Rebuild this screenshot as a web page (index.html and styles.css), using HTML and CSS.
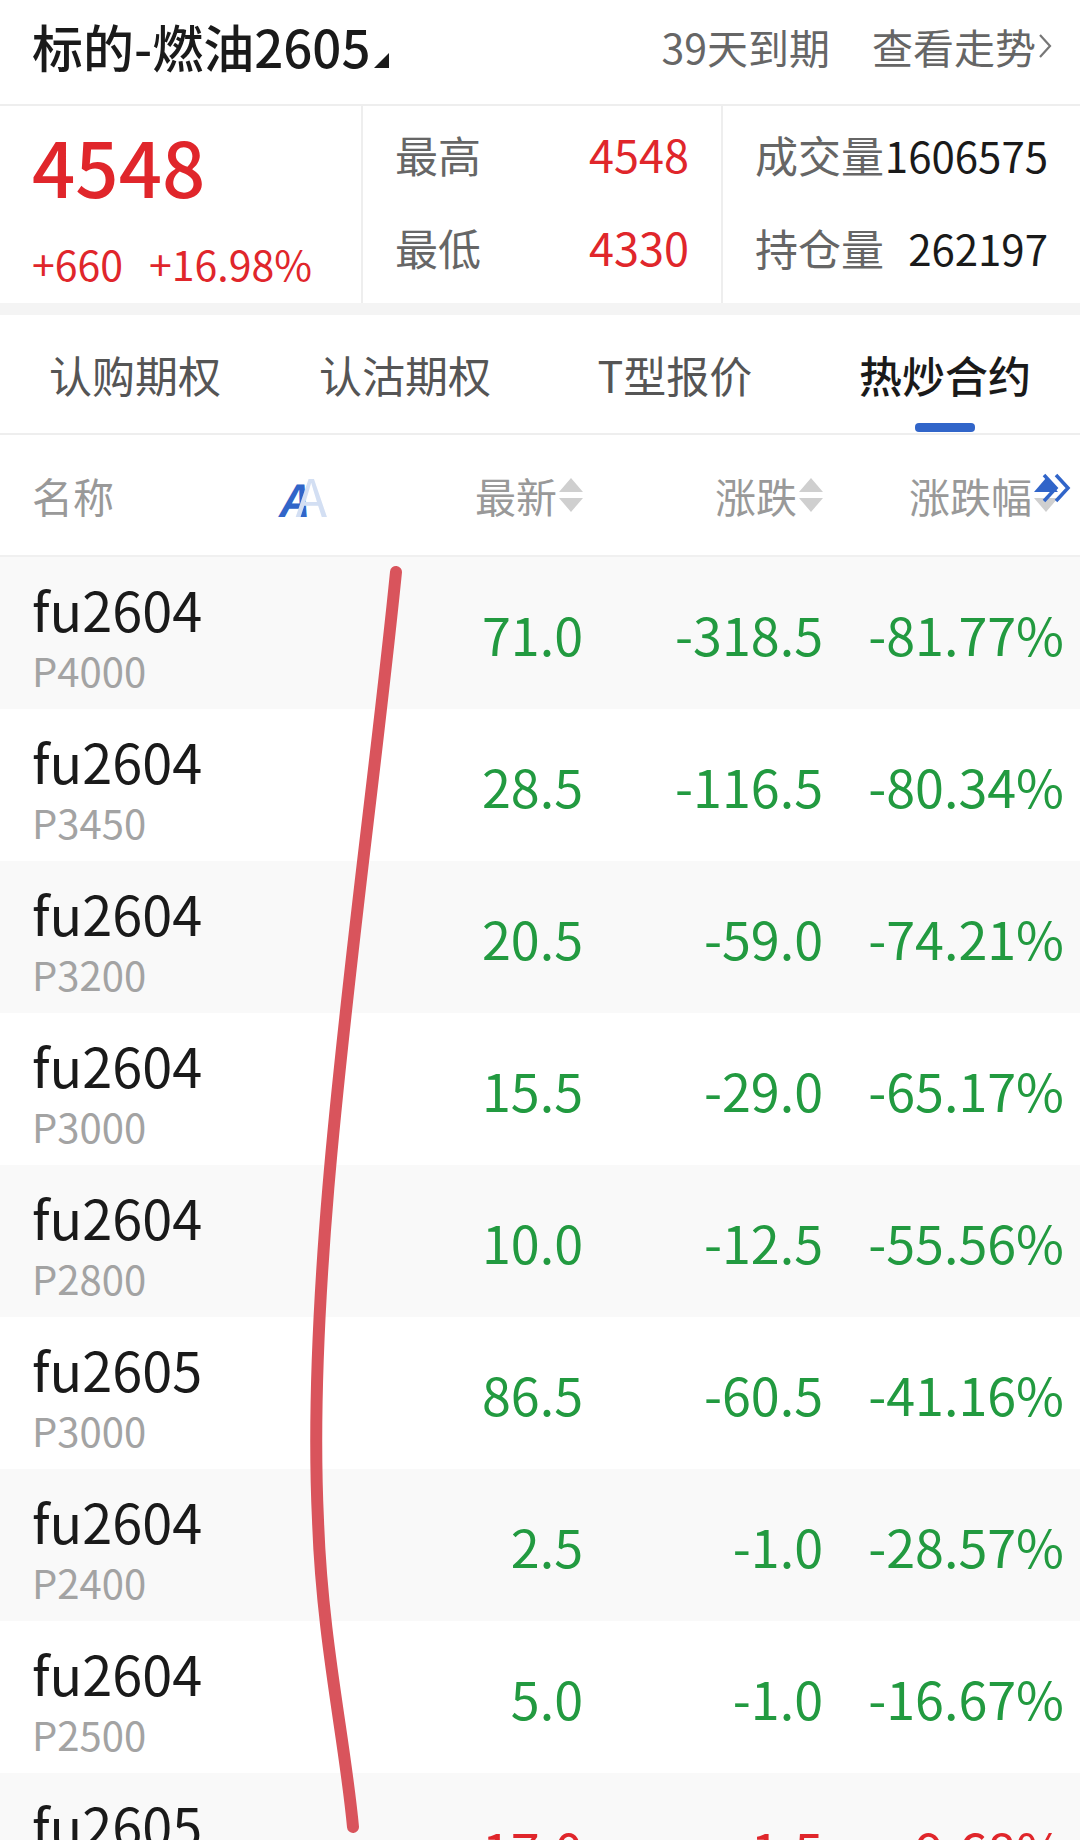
FILE: index.html
```html
<!DOCTYPE html>
<html lang="zh-CN">
<head>
    <meta charset="UTF-8">
    <meta name="viewport" content="width=device-width, initial-scale=1.0">
    <title>热炒合约</title>
    <link rel="stylesheet" href="styles.css">
</head>
<body>
<div class="screen">
    <!-- 标的 -->
    <div class="topbar">
        <div class="title">标的-燃油2605<span class="corner"></span></div>
        <div class="meta">
            <span>39天到期</span>
            <span class="trend">查看走势<svg viewBox="0 0 14 28"><polyline points="2,3 12,14 2,25" fill="none" stroke="#777" stroke-width="2.2"/></svg></span>
        </div>
    </div>

    <!-- 行情 -->
    <div class="quote">
        <div class="quote-main">
            <div class="last">4548</div>
            <div class="change"><span>+660</span><span>+16.98%</span></div>
        </div>
        <div class="quote-col">
            <div class="kv"><span class="k">最高</span><span class="v up">4548</span></div>
            <div class="kv"><span class="k">最低</span><span class="v up">4330</span></div>
        </div>
        <div class="quote-col">
            <div class="kv"><span class="k">成交量</span><span class="v">1606575</span></div>
            <div class="kv"><span class="k">持仓量</span><span class="v">262197</span></div>
        </div>
    </div>

    <!-- 标签 -->
    <div class="tabs">
        <div class="tab">认购期权</div>
        <div class="tab">认沽期权</div>
        <div class="tab">T型报价</div>
        <div class="tab active">热炒合约</div>
    </div>

    <!-- 表头 -->
    <div class="grid thead">
        <div class="th-name">
            <span>名称</span>
            <span class="aa"><span class="aa-s">A</span><span class="aa-l">A</span></span>
        </div>
        <div class="th">最新<svg class="sort" viewBox="0 0 24 36"><polygon points="0,15 12,1 24,15" fill="#cfcfcf"/><polygon points="0,21 24,21 12,35" fill="#cfcfcf"/></svg></div>
        <div class="th">涨跌<svg class="sort" viewBox="0 0 24 36"><polygon points="0,15 12,1 24,15" fill="#cfcfcf"/><polygon points="0,21 24,21 12,35" fill="#cfcfcf"/></svg></div>
        <div class="th th-last">涨跌幅<svg class="sort" viewBox="0 0 24 36"><polygon points="0,15 12,1 24,15" fill="#3165c9"/><polygon points="0,21 24,21 12,35" fill="#cfcfcf"/></svg></div>
        <svg class="more" viewBox="0 0 34 32"><polyline points="4,3 16,16 4,29" fill="none" stroke="#3165c9" stroke-width="3.5"/><polyline points="16,3 28,16 16,29" fill="none" stroke="#3165c9" stroke-width="3.5"/></svg>
    </div>

    <!-- 合约列表 -->
    <div class="rows">
        <div class="grid row">
            <div class="name"><div class="code">fu2604</div><div class="strike">P4000</div></div>
            <div class="num">71.0</div><div class="num">-318.5</div><div class="num">-81.77%</div>
        </div>
        <div class="grid row">
            <div class="name"><div class="code">fu2604</div><div class="strike">P3450</div></div>
            <div class="num">28.5</div><div class="num">-116.5</div><div class="num">-80.34%</div>
        </div>
        <div class="grid row">
            <div class="name"><div class="code">fu2604</div><div class="strike">P3200</div></div>
            <div class="num">20.5</div><div class="num">-59.0</div><div class="num">-74.21%</div>
        </div>
        <div class="grid row">
            <div class="name"><div class="code">fu2604</div><div class="strike">P3000</div></div>
            <div class="num">15.5</div><div class="num">-29.0</div><div class="num">-65.17%</div>
        </div>
        <div class="grid row">
            <div class="name"><div class="code">fu2604</div><div class="strike">P2800</div></div>
            <div class="num">10.0</div><div class="num">-12.5</div><div class="num">-55.56%</div>
        </div>
        <div class="grid row">
            <div class="name"><div class="code">fu2605</div><div class="strike">P3000</div></div>
            <div class="num">86.5</div><div class="num">-60.5</div><div class="num">-41.16%</div>
        </div>
        <div class="grid row">
            <div class="name"><div class="code">fu2604</div><div class="strike">P2400</div></div>
            <div class="num">2.5</div><div class="num">-1.0</div><div class="num">-28.57%</div>
        </div>
        <div class="grid row">
            <div class="name"><div class="code">fu2604</div><div class="strike">P2500</div></div>
            <div class="num">5.0</div><div class="num">-1.0</div><div class="num">-16.67%</div>
        </div>
        <div class="grid row up">
            <div class="name"><div class="code">fu2605</div><div class="strike">P3100</div></div>
            <div class="num">17.0</div><div class="num">1.5</div><div class="num">9.68%</div>
        </div>
    </div>

    <!-- 手写标记 -->
    <svg class="mark" viewBox="0 0 1080 1840"><path d="M396 572 C365 880 305 1250 318 1520 C322 1640 345 1740 353 1827" fill="none" stroke="#d9545c" stroke-width="12" stroke-linecap="round"/></svg>
</div>
</body>
</html>
```

FILE: styles.css
```css
body{
    margin: 0;
}

.screen{
    position: relative;
    width: 1080px;
    height: 1840px;
    overflow: hidden;
    background: #fff;
    font-family: "Noto Sans CJK SC", sans-serif;
}

.topbar{
    display: flex;
    align-items: center;
    height: 92px;
    padding: 0 28px 12px 32px;
    border-bottom: 2px solid #eeeeee;
}

.title{
    font-size: 51px;
    font-weight: 500;
    line-height: 1;
    color: #1a1a1a;
}

.corner{
    display: inline-block;
    width: 0;
    height: 0;
    border-left: 15px solid transparent;
    border-bottom: 15px solid #1a1a1a;
    margin-left: 3px;
}

.meta{
    margin-left: auto;
    display: flex;
    gap: 42px;
    font-size: 41px;
    color: #666;
}

.trend{
    display: flex;
    align-items: center;
}

.trend svg{
    width: 14px;
    height: 30px;
    margin-left: 2px;
}

.quote{
    display: grid;
    grid-template-columns: 361px 360px 1fr;
    height: 197px;
    border-bottom: 12px solid #f4f4f4;
}

.quote-main{
    padding: 15px 0 0 32px;
}

.last{
    font-size: 76px;
    font-weight: 500;
    line-height: 88px;
    color: #e0262b;
}

.change{
    display: flex;
    gap: 26px;
    margin-top: 32px;
    font-size: 41px;
    line-height: 44px;
    color: #e0262b;
}

.quote-col{
    display: flex;
    flex-direction: column;
    gap: 33px;
    padding: 18px 32px 0;
    border-left: 2px solid #eeeeee;
}

.kv{
    display: flex;
    justify-content: space-between;
    align-items: baseline;
    height: 60px;
    line-height: 60px;
}

.k{
    font-size: 43px;
    color: #666;
}

.v{
    font-size: 42px;
    color: #1a1a1a;
}

.v.up{
    font-size: 45px;
    color: #e0262b;
}

.tabs{
    display: flex;
    height: 118px;
    border-bottom: 2px solid #eeeeee;
}

.tab{
    flex: 1;
    display: flex;
    flex-direction: column;
    align-items: center;
    padding-top: 33px;
    font-size: 43px;
    line-height: 52px;
    color: #555;
}

.tab.active{
    color: #1a1a1a;
    font-weight: 500;
}

.tab.active::after{
    content: "";
    width: 60px;
    height: 9px;
    margin-top: 23px;
    border-radius: 4px;
    background: #3165c9;
}

.grid{
    display: grid;
    grid-template-columns: 308px 243px 240px 241px;
    padding: 0 16px 0 32px;
}

.thead{
    position: relative;
    height: 120px;
    align-items: center;
    border-bottom: 2px solid #f0f0f0;
    font-size: 41px;
    color: #999;
}

.th-name{
    display: flex;
    justify-content: space-between;
    align-items: center;
    padding-right: 13px;
}

.aa{
    display: flex;
    align-items: baseline;
    line-height: 1;
}

.aa-s{
    font-size: 44px;
    font-weight: 700;
    font-style: italic;
    color: #3165c9;
}

.aa-l{
    margin-left: -11px;
    font-size: 52px;
    color: #d3dff3;
}

.th{
    display: flex;
    justify-content: flex-end;
    align-items: center;
}

.th-last{
    padding-right: 6px;
}

.sort{
    width: 24px;
    height: 36px;
    margin-left: 2px;
}

.more{
    position: absolute;
    right: 6px;
    top: 37px;
    width: 34px;
    height: 32px;
}

.row{
    height: 152px;
}

.row:nth-child(odd){
    background: #f9f9f9;
}

.name{
    padding-top: 21px;
}

.code{
    font-size: 54px;
    line-height: 62px;
    color: #1a1a1a;
}

.strike{
    margin-top: 8px;
    font-size: 40px;
    line-height: 44px;
    color: #a3a3a3;
}

.num{
    align-self: center;
    text-align: right;
    font-size: 52px;
    color: #229a40;
}

.row.up .num{
    color: #e0262b;
}

.mark{
    position: absolute;
    left: 0;
    top: 0;
    width: 1080px;
    height: 1840px;
    pointer-events: none;
}
```
